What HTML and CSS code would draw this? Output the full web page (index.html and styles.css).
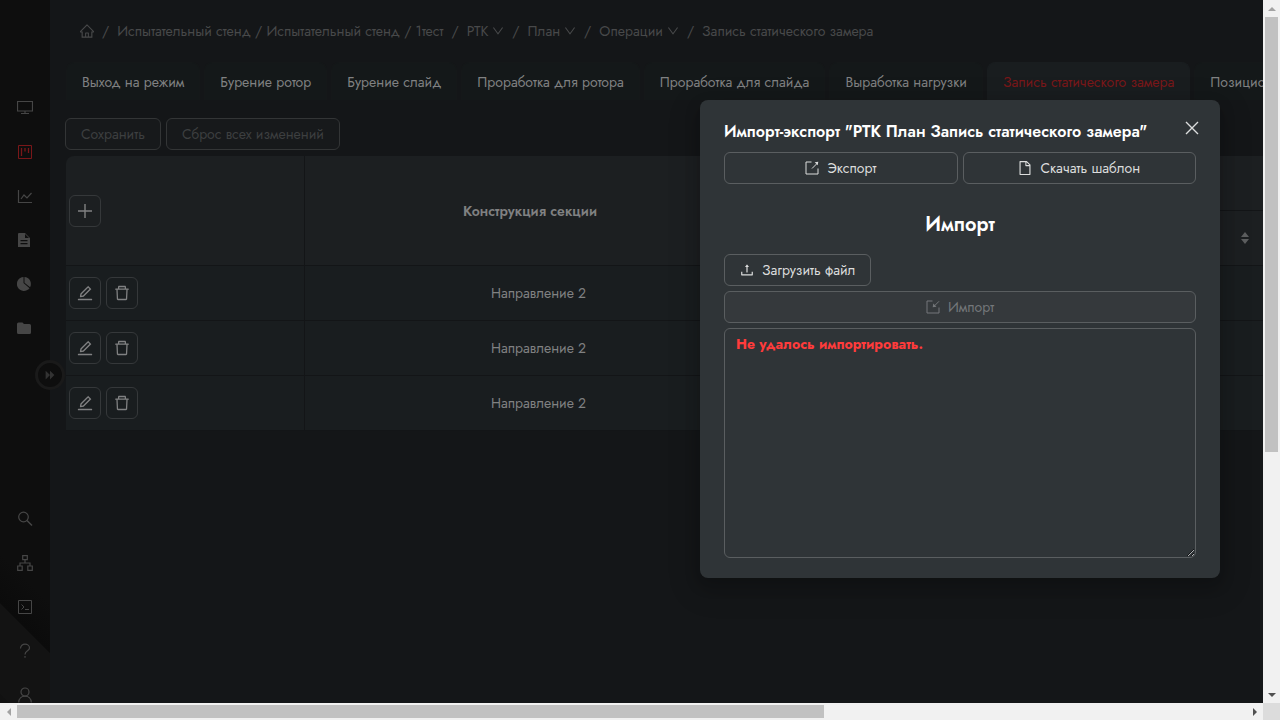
FILE: index.html
```html
<!DOCTYPE html>
<html lang="ru">
<head>
<meta charset="utf-8">
<title>РТК План Запись статического замера</title>
<link rel="stylesheet" href="styles.css">
</head>
<body>
<svg class="sprite" aria-hidden="true">
  <symbol id="home" viewBox="64 64 896 896"><path d="M946.5 505L534.2 92.9a31.5 31.5 0 00-44.4 0L77.5 505a63.9 63.9 0 00-18.8 46c.4 35.2 29.7 63.3 64.9 63.3h42.5V940h691.8V614.3h43.4c17.1 0 33.2-6.7 45.3-18.8a63.6 63.6 0 0018.7-45.3c0-17-6.7-33.1-18.8-45.2zM568 868H456V664h112v204zm217.9-325.7V868H632V640c0-22.1-17.9-40-40-40H432c-22.1 0-40 17.9-40 40v228H238.1V542.3h-96l370-369.7 23.1 23.1L882 542.3h-96.1z"/></symbol>
  <symbol id="down" viewBox="64 64 896 896"><path d="M884 256h-75c-5.1 0-9.9 2.5-12.9 6.6L512 654.2 227.9 262.6c-3-4.1-7.8-6.6-12.9-6.6h-75c-6.5 0-10.3 7.4-6.5 12.7l352.6 486.1c12.8 17.6 39 17.6 51.7 0l352.6-486.1c3.9-5.3.1-12.7-6.4-12.7z"/></symbol>
  <symbol id="edit" viewBox="64 64 896 896"><path d="M257.7 752c2 0 4-.2 6-.5L431.9 722c2-.4 3.9-1.3 5.3-2.8l423.9-423.9a9.96 9.96 0 000-14.1L694.9 114.9c-1.9-1.9-4.4-2.9-7.1-2.9s-5.2 1-7.1 2.9L256.8 538.8c-1.5 1.5-2.4 3.3-2.8 5.3l-29.5 168.2a33.5 33.5 0 009.4 29.8c6.6 6.4 14.9 9.9 23.8 9.9zm67.4-174.4L687.8 215l73.3 73.3-362.7 362.6-88.9 15.7 15.6-89zM880 836H144c-17.7 0-32 14.3-32 32v36c0 4.4 3.6 8 8 8h784c4.4 0 8-3.6 8-8v-36c0-17.7-14.3-32-32-32z"/></symbol>
  <symbol id="trash" viewBox="64 64 896 896"><path d="M360 184h-8c4.4 0 8-3.6 8-8v8h304v-8c0 4.4 3.6 8 8 8h-8v72h72v-80c0-35.3-28.7-64-64-64H352c-35.3 0-64 28.7-64 64v80h72v-72zm504 72H160c-17.7 0-32 14.3-32 32v32c0 4.4 3.6 8 8 8h60.4l24.7 523c1.6 34.1 29.8 61 63.9 61h454c34.2 0 62.3-26.8 63.9-61l24.7-523H888c4.4 0 8-3.6 8-8v-32c0-17.7-14.3-32-32-32zM731.3 840H292.7l-24.2-512h487l-24.2 512z"/></symbol>
  <symbol id="upload" viewBox="64 64 896 896"><path d="M400 317.7h73.9V656c0 4.4 3.6 8 8 8h60c4.4 0 8-3.6 8-8V317.7H624c6.7 0 10.4-7.7 6.3-12.9L518.3 163a8 8 0 00-12.6 0l-112 141.7c-4.1 5.3-.4 13 6.3 13zM878 626h-60c-4.4 0-8 3.6-8 8v154H214V634c0-4.4-3.6-8-8-8h-60c-4.4 0-8 3.6-8 8v198c0 17.7 14.3 32 32 32h684c17.7 0 32-14.3 32-32V634c0-4.4-3.6-8-8-8z"/></symbol>
  <symbol id="file" viewBox="64 64 896 896"><path d="M854.6 288.6L639.4 73.4c-6-6-14.1-9.4-22.6-9.4H192c-17.7 0-32 14.3-32 32v832c0 17.7 14.3 32 32 32h640c17.7 0 32-14.3 32-32V311.3c0-8.5-3.4-16.7-9.4-22.7zM790.2 326H602V137.8L790.2 326zm1.8 562H232V136h302v216a42 42 0 0042 42h216v494z"/></symbol>
  <symbol id="export" viewBox="0 0 14 14"><path d="M6.500 1H1v12h12V7.500" fill="none" stroke="currentColor"/><path d="M7 7.500L11.500 3" fill="none" stroke="currentColor"/><path d="M9.700 1.300L13.300.700 12.700 4.300z"/></symbol>
  <symbol id="import" viewBox="0 0 14 14"><path d="M6.500 1H1v12h12V7.500M13 1.300L8.500 5.800" fill="none" stroke="currentColor"/><path d="M7.300 3.500L6.700 7.300l3.800-.600z"/></symbol>
  <symbol id="close" viewBox="0 0 16 16"><path d="M2 2l12 12M14 2L2 14" fill="none" stroke="currentColor" stroke-width="1.400"/></symbol>
  <symbol id="plus" viewBox="0 0 16 16"><path d="M8 1v14M1 8h14" fill="none" stroke="currentColor" stroke-width="1.400"/></symbol>
  <symbol id="monitor" viewBox="0 0 16 16"><path d="M.500 1.500h15v9.500H.500zM8 11v2M4 13.500h8" fill="none" stroke="currentColor" stroke-width="1.200"/></symbol>
  <symbol id="project" viewBox="0 0 16 16"><path d="M1.500 1.500h13v13h-13z" fill="none" stroke="currentColor"/><path d="M4.500 4v8M8 4v3.500M11.500 4v5" fill="none" stroke="currentColor" stroke-width="1.300"/></symbol>
  <symbol id="chart" viewBox="0 0 16 16"><path d="M1.500 2v12.500H15M4 11l3-4 3 3 4.500-5" fill="none" stroke="currentColor" stroke-width="1.200"/></symbol>
  <symbol id="doc" viewBox="0 0 16 16"><path d="M2 1h6l5 5v9H1V2q0-1 1-1zM8 2v4h4zM3.500 8v1.200h7V8zM3.500 11v1.200h7V11z" fill-rule="evenodd"/></symbol>
  <symbol id="pie" viewBox="0 0 16 16"><path d="M6.500 1a7 7 0 106 11.200L6.500 7zM7.500 1v5.800l5.600 4.400A7 7 0 007.500 1z"/></symbol>
  <symbol id="folder" viewBox="0 0 16 16"><path d="M0 4q0-1.500 1.500-1.500h4L7 4h5.500Q14 4 14 5.500v7q0 1.500-1.500 1.500h-11Q0 14 0 12.500z"/></symbol>
  <symbol id="search" viewBox="0 0 16 16"><circle cx="6.500" cy="6" r="4.800" fill="none" stroke="currentColor" stroke-width="1.200"/><path d="M10 9.500l5 5" stroke="currentColor" stroke-width="1.500"/></symbol>
  <symbol id="tree" viewBox="0 0 16 16"><path d="M5.700.700h4.600v4H5.700zM.700 11h4.500v4.300H.700zM10.800 11h4.500v4.300h-4.500zM8 5v3M3 11V8h10v3" fill="none" stroke="currentColor" stroke-width="1.200"/></symbol>
  <symbol id="console" viewBox="0 0 16 16"><path d="M1.500 1.500h13v13h-13zM4.500 5.500L7 8l-2.500 2.500M8 10.500h4" fill="none" stroke="currentColor"/></symbol>
  <symbol id="help" viewBox="0 0 16 16"><path d="M3.500 5.500C3.500-.500 12.500 0 12.500 5 12.500 8 8 7.500 8 11.500M8 13v1.800" fill="none" stroke="currentColor" stroke-width="1.200"/></symbol>
  <symbol id="user" viewBox="0 0 16 16"><circle cx="8" cy="5" r="4" fill="none" stroke="currentColor" stroke-width="1.200"/><path d="M1.700 15.500C2 7 14 7 14.300 15.500" fill="none" stroke="currentColor" stroke-width="1.200"/></symbol>
  <symbol id="forward" viewBox="0 0 16 16"><path d="M3 3l5 5-5 5zM8 3l5 5-5 5z"/></symbol>
  <symbol id="sort" viewBox="0 0 8 12"><path d="M0 5l4-5 4 5zM0 7l4 5 4-5z"/></symbol>
</svg>

<div class="window">
  <div class="app">
    <nav class="sidebar" aria-label="Разделы">
      <div class="nav-group">
        <a class="nav-item" href="#" aria-label="Монитор"><svg class="icon"><use href="#monitor"/></svg></a>
        <a class="nav-item nav-item-active" href="#" aria-label="РТК"><svg class="icon"><use href="#project"/></svg></a>
        <a class="nav-item" href="#" aria-label="Графики"><svg class="icon"><use href="#chart"/></svg></a>
        <a class="nav-item" href="#" aria-label="Документы"><svg class="icon"><use href="#doc"/></svg></a>
        <a class="nav-item" href="#" aria-label="Статистика"><svg class="icon"><use href="#pie"/></svg></a>
        <a class="nav-item" href="#" aria-label="Файлы"><svg class="icon"><use href="#folder"/></svg></a>
      </div>
      <div class="nav-group">
        <a class="nav-item" href="#" aria-label="Поиск"><svg class="icon"><use href="#search"/></svg></a>
        <a class="nav-item" href="#" aria-label="Структура"><svg class="icon"><use href="#tree"/></svg></a>
        <a class="nav-item" href="#" aria-label="Консоль"><svg class="icon"><use href="#console"/></svg></a>
        <a class="nav-item" href="#" aria-label="Справка"><svg class="icon"><use href="#help"/></svg></a>
        <a class="nav-item" href="#" aria-label="Профиль"><svg class="icon"><use href="#user"/></svg></a>
      </div>
    </nav>
    <button class="sidebar-toggle" aria-label="Развернуть меню"><svg class="icon"><use href="#forward"/></svg></button>

    <main class="main">
      <nav class="breadcrumb" aria-label="Путь">
        <a href="#" aria-label="Главная"><svg class="icon-small"><use href="#home"/></svg></a><span>/</span>
        <a href="#">Испытательный стенд / Испытательный стенд / 1тест</a><span>/</span>
        <a href="#">РТК<svg class="chevron"><use href="#down"/></svg></a><span>/</span>
        <a href="#">План<svg class="chevron"><use href="#down"/></svg></a><span>/</span>
        <a href="#">Операции<svg class="chevron"><use href="#down"/></svg></a><span>/</span>
        <span>Запись статического замера</span>
      </nav>

      <div class="tabs" role="tablist">
        <button class="tab" role="tab">Выход на режим</button>
        <button class="tab" role="tab">Бурение ротор</button>
        <button class="tab" role="tab">Бурение слайд</button>
        <button class="tab" role="tab">Проработка для ротора</button>
        <button class="tab" role="tab">Проработка для слайда</button>
        <button class="tab" role="tab">Выработка нагрузки</button>
        <button class="tab tab-active" role="tab" aria-selected="true">Запись статического замера</button>
        <button class="tab" role="tab">Позиционирование</button>
      </div>

      <div class="toolbar">
        <button class="btn btn-dim" disabled>Сохранить</button>
        <button class="btn btn-dim" disabled>Сброс всех изменений</button>
      </div>

      <table class="grid">
        <colgroup><col class="col-actions"><col class="col-section"><col class="col-values"></colgroup>
        <thead>
          <tr>
            <th rowspan="2"><button class="btn btn-icon" aria-label="Добавить"><svg class="icon"><use href="#plus"/></svg></button></th>
            <th rowspan="2" class="title-cell">Конструкция секции</th>
            <th></th>
          </tr>
          <tr><th class="sort-cell"><svg class="sorter"><use href="#sort"/></svg></th></tr>
        </thead>
        <tbody>
          <tr>
            <td><div class="actions"><button class="btn btn-icon" aria-label="Изменить"><svg class="icon"><use href="#edit"/></svg></button><button class="btn btn-icon" aria-label="Удалить"><svg class="icon"><use href="#trash"/></svg></button></div></td>
            <td class="value-cell">Направление 2</td><td></td>
          </tr>
          <tr>
            <td><div class="actions"><button class="btn btn-icon" aria-label="Изменить"><svg class="icon"><use href="#edit"/></svg></button><button class="btn btn-icon" aria-label="Удалить"><svg class="icon"><use href="#trash"/></svg></button></div></td>
            <td class="value-cell">Направление 2</td><td></td>
          </tr>
          <tr>
            <td><div class="actions"><button class="btn btn-icon" aria-label="Изменить"><svg class="icon"><use href="#edit"/></svg></button><button class="btn btn-icon" aria-label="Удалить"><svg class="icon"><use href="#trash"/></svg></button></div></td>
            <td class="value-cell">Направление 2</td><td></td>
          </tr>
        </tbody>
      </table>
    </main>

    <section class="dialog" role="dialog" aria-labelledby="dialog-title">
      <header class="dialog-head">
        <h1 class="dialog-title" id="dialog-title">Импорт-экспорт "РТК План Запись статического замера"</h1>
        <button class="dialog-close" aria-label="Закрыть"><svg class="icon"><use href="#close"/></svg></button>
      </header>
      <div class="dialog-row">
        <button class="btn"><svg class="icon-small"><use href="#export"/></svg>Экспорт</button>
        <button class="btn"><svg class="icon-small"><use href="#file"/></svg>Скачать шаблон</button>
      </div>
      <h2 class="dialog-heading">Импорт</h2>
      <div class="dialog-stack">
        <button class="btn btn-upload"><svg class="icon-small"><use href="#upload"/></svg>Загрузить файл</button>
        <button class="btn btn-disabled" disabled><svg class="icon-small"><use href="#import"/></svg>Импорт</button>
        <textarea class="log" aria-label="Результат импорта" readonly>Не удалось импортировать.</textarea>
      </div>
    </section>
  </div>

  <div class="bar bar-vertical"><i class="arrow arrow-up"></i><div class="thumb-vertical"></div><i class="arrow arrow-down"></i></div>
  <div class="bar bar-horizontal"><i class="arrow arrow-left"></i><div class="thumb-horizontal"></div><i class="arrow arrow-right"></i></div>
  <div class="corner"></div>
</div>
</body>
</html>
```
FILE: styles.css
```css
* { box-sizing: border-box; }

body {
  margin: 0;
  background: #141618;
  font: 14px/22px "Jost", Roboto, "Noto Sans", sans-serif;
}

button, textarea { font: inherit; color: inherit; }
a { color: inherit; text-decoration: none; }
svg { fill: currentColor; flex: none; }
.sprite { display: none; }
.icon { width: 16px; height: 16px; }
.icon-small { width: 14px; height: 14px; }

.window {
  display: grid;
  grid-template: minmax(0, 1fr) 17px / minmax(0, 1fr) 17px;
  height: 100vh;
}

.app {
  position: relative;
  display: flex;
  overflow: hidden;
}

/* Sidebar */
.sidebar {
  display: flex;
  flex-direction: column;
  justify-content: space-between;
  flex: none;
  width: 50px;
  margin-bottom: -14px;
  padding-top: 86px;
  background: linear-gradient(45deg, #111 0 16px, #131313 17px 80px, #0b0b0b 81px, #0e0e0e 116px);
}
.nav-item {
  display: flex;
  align-items: center;
  justify-content: center;
  height: 44px;
  color: #464646;
}
.nav-item-active { color: #7a1719; }
.sidebar-toggle {
  position: absolute;
  top: 360px;
  left: 35px;
  display: flex;
  align-items: center;
  justify-content: center;
  width: 30px;
  height: 30px;
  padding: 0;
  border: 3px solid #1a1a1a;
  border-radius: 50%;
  background: #0e0e0e;
  color: #333;
}
.sidebar-toggle .icon { width: 14px; height: 14px; }

/* Page */
.main {
  flex: 1;
  min-width: 0;
  padding: 20px 0 0 15px;
  overflow: hidden;
  color: #808182;
}
.breadcrumb {
  display: flex;
  gap: 8px;
  padding-left: 15px;
  color: #48494a;
  white-space: nowrap;
}
.breadcrumb a { display: flex; align-items: center; gap: 4px; }
.chevron { width: 12px; height: 12px; }

.tabs {
  display: flex;
  gap: 4px;
  margin: 20px 0 18px 1px;
}
.tab {
  flex: none;
  height: 38px;
  padding: 0 15px;
  border: 1px solid #151819;
  border-bottom: 0;
  border-radius: 8px 8px 0 0;
  background: #141819;
  white-space: nowrap;
}
.tab-active { border-color: #191d1f; background: #191d1f; color: #7a1719; }

.toolbar { display: flex; gap: 5px; margin-bottom: 6px; }

.btn {
  display: flex;
  align-items: center;
  justify-content: center;
  gap: 8px;
  height: 32px;
  padding: 0 15px;
  border: 1px solid #5a5e60;
  border-radius: 6px;
  background: transparent;
  white-space: nowrap;
}
.btn-dim { border-color: #333536; background: #17191b; color: #3d3f40; }
.btn-icon { width: 32px; padding: 0; border-color: #35383a; }

.grid {
  width: 1480px;
  margin-left: 1px;
  border-spacing: 0;
  table-layout: fixed;
}
.col-actions { width: 239px; }
.col-section { width: 468px; }
.grid th, .grid td {
  height: 55px;
  padding: 0 3px;
  border-right: 1px solid #131517;
  border-bottom: 1px solid #131517;
  background: #191d1f;
}
.grid th { background: #1c1f21; font-weight: 600; }
.grid th:first-child { border-top-left-radius: 8px; }
.grid .title-cell { padding-right: 20px; }
.grid .sort-cell { border-radius: 0; padding-left: 468px; }
.sorter { display: block; width: 8px; height: 12px; color: #5c5e5f; }
.actions { display: flex; gap: 5px; }
.value-cell { text-align: center; }

/* Dialog */
.dialog {
  position: absolute;
  top: 100px;
  right: 43px;
  width: 520px;
  padding: 20px 24px;
  border-radius: 8px;
  background: #2f3437;
  box-shadow: 0 6px 16px rgba(0, 0, 0, .2), 0 9px 28px 8px rgba(0, 0, 0, .1);
  color: #dcdddd;
}
.dialog-head {
  display: flex;
  align-items: center;
  justify-content: space-between;
  margin-bottom: 8px;
}
.dialog-title {
  margin: 0;
  color: #fff;
  font-size: 16px;
  line-height: 24px;
  font-weight: 600;
  white-space: nowrap;
}
.dialog-close {
  display: flex;
  align-items: center;
  justify-content: center;
  width: 22px;
  height: 22px;
  margin: -8px -7px 0 0;
  padding: 0;
  border: 0;
  background: transparent;
}
.dialog-row { display: grid; grid-template-columns: 1fr 1fr; gap: 5px; }
.dialog-heading {
  margin: 27px 0 15px;
  color: #fff;
  font-size: 20px;
  line-height: 28px;
  font-weight: 600;
  text-align: center;
}
.dialog-stack { display: flex; flex-direction: column; gap: 5px; }
.btn-upload { align-self: flex-start; }
.btn-disabled { background: #35393c; color: #74777a; }
.log {
  width: 100%;
  height: 230px;
  padding: 4px 11px;
  border: 1px solid #5a5e60;
  border-radius: 6px;
  background: transparent;
  color: #ff3b3b;
  font-weight: 700;
  resize: vertical;
}

/* Window scrollbars */
.bar { display: grid; background: #f1f1f1; }
.bar-vertical { grid-template-rows: 17px 1fr 17px; }
.bar-horizontal { grid-template-columns: 17px 1fr 17px; }
.thumb-vertical { width: 13px; height: 65%; margin: 0 2px; background: #c1c1c1; }
.thumb-horizontal { width: 65.7%; height: 13px; margin: 2px 0; background: #c1c1c1; }
.corner { background: #dcdcdc; }
.arrow { place-self: center; border: 4px solid transparent; }
.arrow-up { border-top: 0; border-bottom-color: #a3a3a3; }
.arrow-down { border-bottom: 0; border-top-color: #505050; }
.arrow-left { border-left: 0; border-right-color: #a3a3a3; }
.arrow-right { border-right: 0; border-left-color: #505050; }
```
